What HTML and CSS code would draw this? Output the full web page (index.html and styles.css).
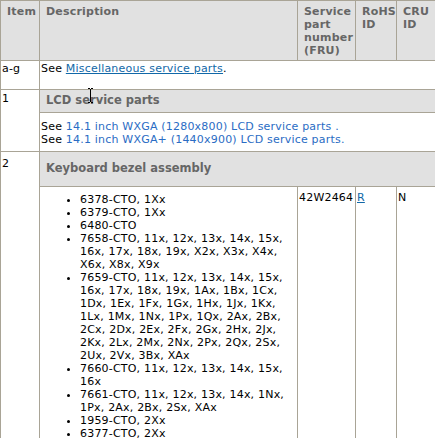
FILE: index.html
```html
<!DOCTYPE html>
<html lang="en">
<head>
<meta charset="utf-8">
<title>Parts list</title>
<link rel="stylesheet" href="styles.css">
</head>
<body>
<table class="parts">
  <colgroup>
    <col class="w-item"><col class="w-desc"><col class="w-fru"><col class="w-rohs"><col class="w-cru">
  </colgroup>
  <thead>
    <tr>
      <th class="hd">Item</th>
      <th class="hd">Description</th>
      <th class="hd">Service part number (FRU)</th>
      <th class="hd">RoHS ID</th>
      <th class="hd">CRU ID</th>
    </tr>
  </thead>
  <tbody>
    <tr>
      <td class="item">a-g</td>
      <td class="misc" colspan="4">See <a class="link-ul" href="#">Miscellaneous service parts</a>.</td>
    </tr>
    <tr>
      <td class="item item-1" rowspan="2">1</td>
      <th class="sub sub-lcd" colspan="4">LCD service parts</th>
    </tr>
    <tr>
      <td class="lcd" colspan="4">See <a class="link-plain" href="#">14.1 inch WXGA (1280x800) LCD service parts .</a><br>See <a class="link-plain" href="#">14.1 inch WXGA+ (1440x900) LCD service parts.</a></td>
    </tr>
    <tr>
      <td class="item item-2" rowspan="2">2</td>
      <th class="sub sub-kb" colspan="4">Keyboard bezel assembly</th>
    </tr>
    <tr>
      <td class="desc">
        <ul class="models">
          <li>6378-CTO, 1Xx</li>
          <li>6379-CTO, 1Xx</li>
          <li>6480-CTO</li>
          <li>7658-CTO, 11x, 12x, 13x, 14x, 15x, 16x, 17x, 18x, 19x, X2x, X3x, X4x, X6x, X8x, X9x</li>
          <li>7659-CTO, 11x, 12x, 13x, 14x, 15x, 16x, 17x, 18x, 19x, 1Ax, 1Bx, 1Cx, 1Dx, 1Ex, 1Fx, 1Gx, 1Hx, 1Jx, 1Kx, 1Lx, 1Mx, 1Nx, 1Px, 1Qx, 2Ax, 2Bx, 2Cx, 2Dx, 2Ex, 2Fx, 2Gx, 2Hx, 2Jx, 2Kx, 2Lx, 2Mx, 2Nx, 2Px, 2Qx, 2Sx, 2Ux, 2Vx, 3Bx, XAx</li>
          <li>7660-CTO, 11x, 12x, 13x, 14x, 15x, 16x</li>
          <li>7661-CTO, 11x, 12x, 13x, 14x, 1Nx, 1Px, 2Ax, 2Bx, 2Sx, XAx</li>
          <li>1959-CTO, 2Xx</li>
          <li>6377-CTO, 2Xx</li>
        </ul>
      </td>
      <td class="cell">42W2464</td>
      <td class="cell"><a class="link-ul" href="#">R</a></td>
      <td class="cell">N</td>
    </tr>
  </tbody>
</table>
<svg class="ibeam" width="7" height="15" viewBox="0 0 7 15" aria-hidden="true">
  <path d="M1 0.5h2M4 0.5h2M3.5 1v13M1 14.5h2M4 14.5h2" stroke="#000" stroke-width="1" fill="none"/>
</svg>
</body>
</html>
```
FILE: styles.css
```css
html, body {
  margin: 0;
  padding: 0;
  overflow: hidden;
  background: #fff;
}

body {
  font-family: "DejaVu Sans", Verdana, sans-serif;
  font-size: 11px;
  line-height: 13px;
  letter-spacing: 0.2px;
  color: #000;
}

.parts {
  border-collapse: separate;
  border-spacing: 0;
  table-layout: fixed;
  width: 438px;
  border-left: 1px solid #a9a496;
  border-top: 1px solid #a9a496;
}

.w-item { width: 39px; }
.w-desc { width: 258px; }
.w-fru { width: 58px; }
.w-rohs { width: 41px; }
.w-cru { width: 41px; }

.parts th,
.parts td {
  border-right: 1px solid #a9a496;
  border-bottom: 1px solid #a9a496;
  vertical-align: top;
  text-align: left;
  padding: 1px;
}

.parts th.hd {
  background: #e1e1e1;
  color: #666;
  font-weight: bold;
  padding: 4px 6px 3px;
}

.parts th.sub {
  background: #e1e1e1;
  color: #666;
  font-weight: bold;
  font-size: 11.5px;
  line-height: 15px;
  letter-spacing: 0;
  padding: 3px 6px 4px;
}

.parts th.sub-kb {
  padding: 9px 6px 10px;
}

.parts td.item {
  padding: 1px;
}

.parts td.item-1 { padding-top: 2px; }
.parts td.item-2 { padding-top: 5px; }

.parts td.misc {
  padding: 1px 1px 14px;
}

.parts td.lcd {
  padding: 7px 1px 5px;
}

.parts td.cell {
  padding-top: 4px;
}

.parts td.desc {
  padding: 6px 1px 1px;
}

.models {
  margin: 0;
  padding-left: 39px;
}

.link-ul {
  color: #1168a8;
  text-decoration: underline;
}

.link-plain {
  color: #2a6cc4;
  text-decoration: none;
}

.ibeam {
  position: absolute;
  left: 87px;
  top: 88px;
}
```
